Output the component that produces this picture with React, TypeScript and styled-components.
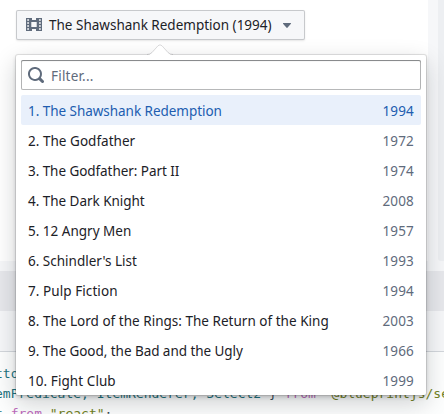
import React from "react";
import styled, { createGlobalStyle } from "styled-components";

const Global = createGlobalStyle`
  * { box-sizing: border-box; }
  body { margin: 0; background: #f6f7f9; overflow: hidden; }
`;

const Page = styled.div`
  position: relative;
  display: flex;
  flex-direction: column;
  width: 444px;
  height: 414px;
  overflow: hidden;
  background: #f6f7f9;
  color: #1c2127;
  font: 13.5px/20px "Noto Sans", "Open Sans", sans-serif;
`;

const Top = styled.div`
  display: flex;
  justify-content: space-between;
  height: 261px;
`;

const Example = styled.div`
  width: 428px;
  padding: 10px 0 0 16px;
  background: #fff;
`;

const Options = styled.div`
  width: 6px;
  background: #edeff2;
  border-bottom-left-radius: 3px;
`;

const SourceBar = styled.div`
  height: 40px;
  margin-top: 10px;
  background: #e7e8ec;
`;

const Code = styled.pre`
  margin: 40px 0 0;
  height: 63px;
  padding: 12px 0 0;
  border-top: 1px solid #d3d7dc;
  background: #fdfefe;
  color: #1d7480;
  font: 13px/20px "DejaVu Sans Mono", monospace;
`;

const Line = styled.div`
  white-space: pre;
  text-indent: -5px;
`;
const Keyword = styled.span`color: #bd6bbd;`;
const Str = styled.span`color: #728224;`;
const Punct = styled.span`color: #394b59;`;

const Button = styled.button`
  display: flex;
  align-items: center;
  width: 289px;
  height: 30px;
  padding: 0 10px;
  border: 0;
  border-radius: 2px;
  background: #f6f7f9;
  box-shadow: inset 0 0 0 1px rgba(17, 20, 24, 0.2), 0 1px 2px rgba(17, 20, 24, 0.1);
  color: inherit;
  font: inherit;
`;

const Label = styled.span<{ $spacing?: number }>`
  white-space: nowrap;
  letter-spacing: ${(p) => p.$spacing ?? 0}px;
`;

const ButtonLabel = styled(Label)`
  margin: 0 auto 0 7px;
`;

const Popover = styled.div`
  position: absolute;
  left: 16px;
  top: 55px;
  width: 410px;
  height: 340px;
  padding: 5px;
  border-radius: 2px;
  background: #fff;
  box-shadow: 0 0 0 1px rgba(17, 20, 24, 0.1), 0 2px 4px rgba(17, 20, 24, 0.2),
    0 8px 24px rgba(17, 20, 24, 0.2);
`;

const Arrow = styled.svg`
  position: absolute;
  left: 131px;
  top: -12px;
`;

const Search = styled.div`
  display: flex;
  align-items: center;
  gap: 7px;
  height: 30px;
  padding: 0 7px;
  margin-bottom: 5px;
  border-radius: 2px;
  color: #5f6b7c;
  box-shadow: inset 0 0 0 1px rgba(17, 20, 24, 0.3), inset 0 1px 1px rgba(17, 20, 24, 0.3);
`;

const Placeholder = styled(Label)`
  padding-top: 2px;
`;

const Item = styled.div<{ $active: boolean }>`
  display: flex;
  align-items: center;
  justify-content: space-between;
  height: 30px;
  padding: 2px 7px 0;
  border-radius: 2px;
  color: ${(p) => (p.$active ? "#215db0" : "#1c2127")};
  background: ${(p) => (p.$active ? "#e9f0fb" : "transparent")};
`;

const Year = styled.span<{ $active: boolean }>`
  color: ${(p) => (p.$active ? "#215db0" : "#5f6b7c")};
  letter-spacing: 0.15px;
`;

/* title, year, tracking */
const films: [string, number, number][] = [
  ["The Shawshank Redemption", 1994, -0.04],
  ["The Godfather", 1972, 0.03],
  ["The Godfather: Part II", 1974, -0.06],
  ["The Dark Knight", 2008, -0.03],
  ["12 Angry Men", 1957, 0],
  ["Schindler's List", 1993, 0],
  ["Pulp Fiction", 1994, 0.07],
  ["The Lord of the Rings: The Return of the King", 2003, 0.02],
  ["The Good, the Bad and the Ugly", 1966, -0.05],
  ["Fight Club", 1999, 0.07],
];

const FilmIcon = () => (
  <svg width="16" height="16" viewBox="0 0 16 16" fill="#5f6b7c" fillRule="evenodd">
    <path d="M0 1h6v2h4V1h6v13h-6v-2H6v2H0zM1.200 2.200v1.600H3V2.200zM1.200 5.200v1.600H3V5.200zM1.200 8.200v1.600H3V8.200zM1.200 11.200v1.600H3v-1.600zM13 2.200v1.600h1.800V2.200zM13 5.200v1.600h1.800V5.200zM13 8.200v1.600h1.800V8.200zM13 11.200v1.600h1.800v-1.600zM5.300 5v5h5.400V5z" />
  </svg>
);

const SearchIcon = () => (
  <svg width="16" height="16" viewBox="0 0 16 16" fill="#5f6b7c">
    <path d="m15.55 13.43-2.67-2.68a6.94 6.94 0 0 0 1.11-3.76c0-3.87-3.13-7-7-7s-7 3.13-7 7 3.13 7 7 7c1.39 0 2.68-.42 3.76-1.11l2.68 2.67a1.5 1.5 0 1 0 2.12-2.12zm-8.56-1.44c-2.76 0-5-2.24-5-5s2.24-5 5-5 5 2.24 5 5-2.24 5-5 5z" />
  </svg>
);

export default function App() {
  return (
    <Page>
      <Global />
      <Top>
        <Example>
          <Button>
            <FilmIcon />
            <ButtonLabel>The Shawshank Redemption (1994)</ButtonLabel>
            <svg width="16" height="16" fill="#5f6b7c">
              <path d="M4.4 6h7.3q.6.3.2.8L8.4 10.7q-.4.4-.8 0L4 6.8q-.2-.6.4-.8z" />
            </svg>
          </Button>
        </Example>
        <Options />
      </Top>
      <SourceBar />
      <Code>
        <Line>tton</Line>
        <Line>
          emPredicate, ItemRenderer, Select2 <Punct>{"}"}</Punct> <Keyword>from</Keyword> <Str>"@blueprintjs/select"</Str>
        </Line>
        <Line>
          t <Keyword>from</Keyword> <Str>"react"</Str><Punct>;</Punct>
        </Line>
      </Code>
      <Popover>
        <Arrow width="26" height="13" viewBox="0 0 26 13">
          <path d="M0 13v-1q3 0 5-2l6-7.200q2-2 4 0l6 7.200q2 2 5 2v1z" fill="#fff" />
          <path d="M0 11.500q3 0 5-2l6-6.700q2-2 4 0l6 6.700q2 2 5 2" fill="none" stroke="#111418" strokeOpacity="0.15" />
        </Arrow>
        <Search>
          <SearchIcon />
          <Placeholder $spacing={0.2}>Filter...</Placeholder>
        </Search>
        {films.map(([title, year, spacing], i) => (
          <Item key={title} $active={i === 0}>
            <Label $spacing={spacing}>{`${i + 1}. ${title}`}</Label>
            <Year $active={i === 0}>{year}</Year>
          </Item>
        ))}
      </Popover>
    </Page>
  );
}
